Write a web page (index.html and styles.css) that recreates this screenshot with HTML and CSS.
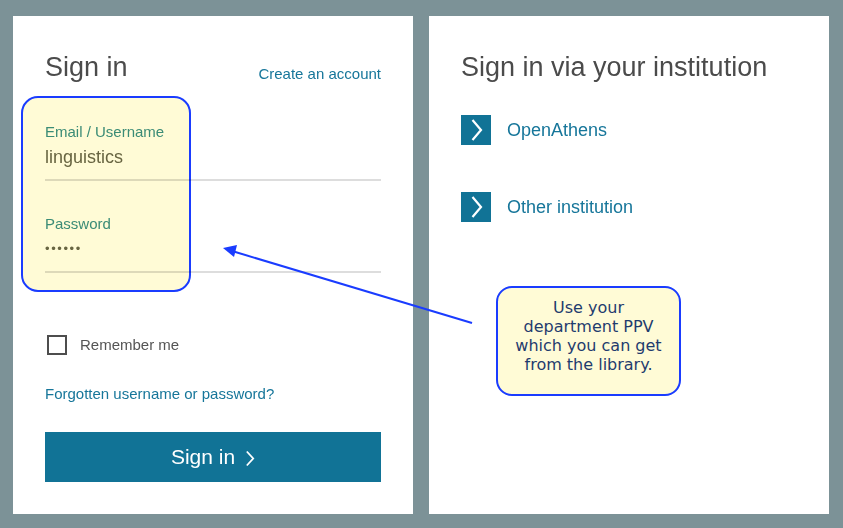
FILE: index.html
```html
<!DOCTYPE html>
<html lang="en">
<head>
<meta charset="utf-8">
<title>Sign in</title>
<link rel="stylesheet" href="styles.css">
</head>
<body>
<div class="page">
  <section class="card">
    <div class="card-head">
      <h1 class="title">Sign in</h1>
      <a class="link small" href="#">Create an account</a>
    </div>
    <div class="field first">
      <div class="label">Email / Username</div>
      <div class="value">linguistics</div>
    </div>
    <div class="field second">
      <div class="label">Password</div>
      <div class="value"><span class="dots">••••••</span></div>
    </div>
    <label class="remember"><span class="box"></span><span>Remember me</span></label>
    <a class="link forgot" href="#">Forgotten username or password?</a>
    <button class="btn" type="button">Sign in
      <svg class="btn-chev" width="10" height="17" viewBox="0 0 10 17"><path d="M1.8 1.5 L8.2 8.5 L1.8 15.5" fill="none" stroke="#fff" stroke-width="1.8"/></svg>
    </button>
  </section>
  <section class="card">
    <h1 class="title">Sign in via your institution</h1>
    <a class="option first-opt" href="#">
      <span class="opt-icon"><svg width="12" height="22" viewBox="0 0 12 22"><path d="M1.5 1 L10 11 L1.5 21" fill="none" stroke="#fff" stroke-width="2.2"/></svg></span>
      <span>OpenAthens</span>
    </a>
    <a class="option second-opt" href="#">
      <span class="opt-icon"><svg width="12" height="22" viewBox="0 0 12 22"><path d="M1.5 1 L10 11 L1.5 21" fill="none" stroke="#fff" stroke-width="2.2"/></svg></span>
      <span>Other institution</span>
    </a>
  </section>
</div>
<div class="highlight"></div>
<svg class="arrow" width="843" height="528" viewBox="0 0 843 528">
  <line x1="472" y1="323" x2="232" y2="251" stroke="#1a3cff" stroke-width="2"/>
  <polygon points="223,248 237,245 234,257" fill="#1a3cff"/>
</svg>
<div class="callout">Use your department PPV which you can get from the library.</div>
</body>
</html>
```
FILE: styles.css
```css
* { box-sizing: border-box; }
html, body { margin: 0; padding: 0; }
body {
  background: #7c9297;
  font-family: "Liberation Sans", Arial, sans-serif;
  width: 843px;
  height: 528px;
  overflow: hidden;
  position: relative;
}
.page {
  display: flex;
  gap: 16px;
  height: 528px;
  padding: 16px 14px 14px 13px;
}
.card {
  width: 400px;
  background: #fff;
  padding: 36px 32px 0;
  display: flex;
  flex-direction: column;
  align-items: flex-start;
}
.card > * { flex-shrink: 0; }
.card-head {
  display: flex;
  justify-content: space-between;
  align-items: flex-end;
  width: 100%;
}
.title {
  margin: 0;
  font-weight: normal;
  font-size: 27px;
  line-height: 30px;
  color: #4b4b4b;
}
.link {
  color: #16769a;
  text-decoration: none;
}
.small { font-size: 15px; line-height: 17px; }
.field {
  width: 100%;
  border-bottom: 2px solid #dddddd;
  padding-bottom: 11px;
}
.field.first { margin-top: 41px; }
.field.second { margin-top: 34px; }
.label {
  font-size: 15px;
  line-height: 18px;
  color: #3b8e8c;
}
.value {
  margin-top: 5px;
  font-size: 18px;
  line-height: 22px;
  height: 22px;
  color: #68674e;
}
.dots {
  font-size: 13px;
  line-height: 0;
  letter-spacing: 1.6px;
  position: relative;
  top: -2px;
}
.remember {
  margin-top: 62px;
  margin-left: 2px;
  display: flex;
  align-items: center;
  gap: 13px;
  font-size: 15px;
  line-height: 18px;
  color: #555;
}
.box {
  width: 20px;
  height: 20px;
  border: 2px solid #4d4d4d;
}
.forgot {
  margin-top: 30px;
  font-size: 15px;
  line-height: 18px;
}
.btn {
  margin-top: 29px;
  width: 100%;
  height: 50px;
  border: 0;
  background: #117396;
  color: #fff;
  font-family: "Liberation Sans", Arial, sans-serif;
  font-size: 21px;
  display: flex;
  align-items: center;
  justify-content: center;
  gap: 10px;
  padding: 0;
}
.btn-chev { margin-top: 2px; }
.option {
  display: flex;
  align-items: center;
  gap: 16px;
  color: #16769a;
  text-decoration: none;
  font-size: 18px;
  line-height: 22px;
}
.first-opt { margin-top: 33px; }
.second-opt { margin-top: 47px; }
.opt-icon {
  width: 30px;
  height: 30px;
  background: #117396;
  display: flex;
  align-items: center;
  justify-content: center;
}
.opt-icon svg { margin-left: 1px; }
.highlight {
  position: absolute;
  left: 21px;
  top: 96px;
  width: 170px;
  height: 196px;
  border: 2px solid #1a3cff;
  border-radius: 17px;
  background: #fffbd6;
  mix-blend-mode: multiply;
}
.arrow {
  position: absolute;
  left: 0;
  top: 0;
}
.callout {
  position: absolute;
  left: 496px;
  top: 286px;
  width: 185px;
  height: 110px;
  border: 2px solid #1a3cff;
  border-radius: 16px;
  background: #fffbd6;
  padding: 10px 12px 0;
  text-align: center;
  font-family: "DejaVu Sans", Verdana, sans-serif;
  font-size: 16px;
  line-height: 19px;
  color: #1f3c6e;
}
```
